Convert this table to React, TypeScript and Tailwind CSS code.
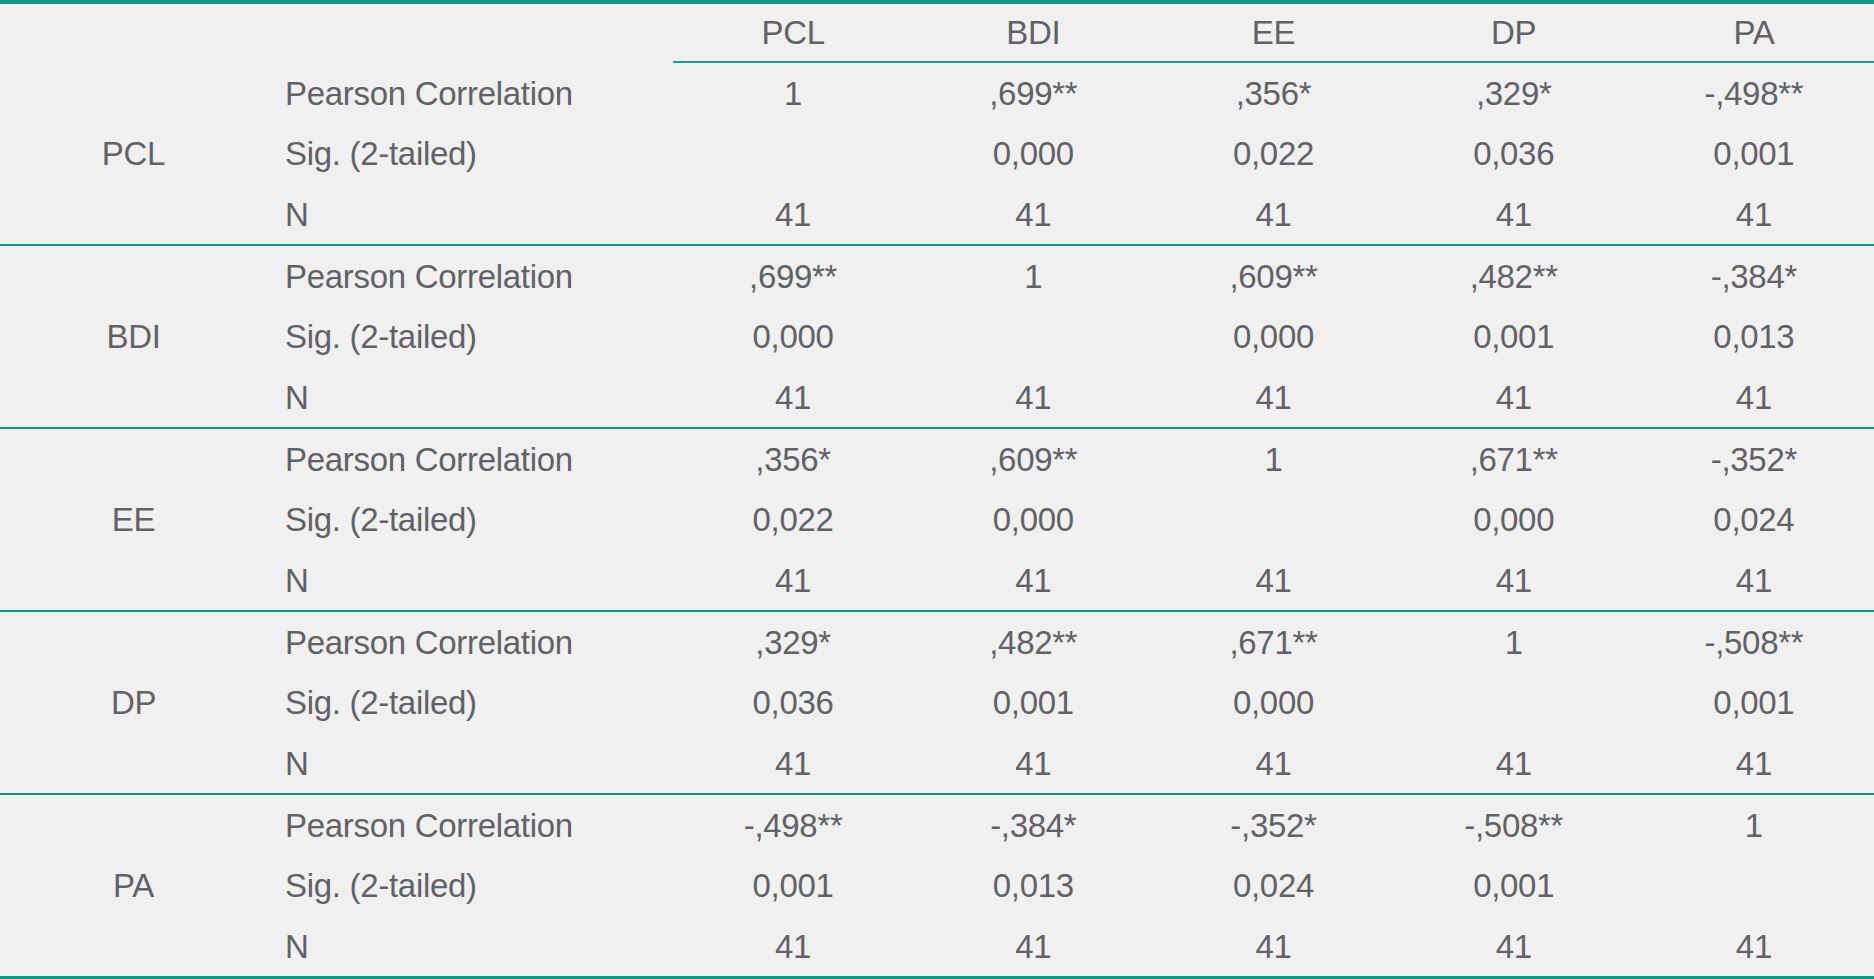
import React from "react";

const vars = ["PCL", "BDI", "EE", "DP", "PA"];

// correlation matrix rows: [pearson, sig] per variable
const data: Record<string, { r: string[]; sig: string[] }> = {
  PCL: { r: ["1", ",699**", ",356*", ",329*", "-,498**"], sig: ["", "0,000", "0,022", "0,036", "0,001"] },
  BDI: { r: [",699**", "1", ",609**", ",482**", "-,384*"], sig: ["0,000", "", "0,000", "0,001", "0,013"] },
  EE: { r: [",356*", ",609**", "1", ",671**", "-,352*"], sig: ["0,022", "0,000", "", "0,000", "0,024"] },
  DP: { r: [",329*", ",482**", ",671**", "1", "-,508**"], sig: ["0,036", "0,001", "0,000", "", "0,001"] },
  PA: { r: ["-,498**", "-,384*", "-,352*", "-,508**", "1"], sig: ["0,001", "0,013", "0,024", "0,001", ""] },
};

const cols = "grid grid-cols-[267px_406px_repeat(5,1fr)]";

function Cell({ children }: { children?: React.ReactNode }) {
  return <div className="flex items-center justify-center">{children}</div>;
}

export default function App() {
  return (
    <div
      className="min-h-screen w-full bg-[#f0f0f0] text-[#616266] text-[33px] tracking-[-0.3px] leading-none"
      style={{ fontFamily: '"Liberation Sans", Arial, sans-serif' }}
    >
      <div className="border-t-4 border-b-[3px] border-[#0a9a82]">
        {/* header */}
        <div className={`${cols} h-[59px]`}>
          <div />
          <div />
          {vars.map((v) => (
            <div key={v} className="flex items-center justify-center border-b-2 border-[#14a38b]">
              {v}
            </div>
          ))}
        </div>

        {vars.map((v, gi) => (
          <div
            key={v}
            className={`${cols} grid-rows-[60px_61px_60px] ${gi < vars.length - 1 ? "border-b-2 border-[#0a9a82]" : ""}`}
          >
            <div className="row-span-3 flex items-center justify-center">{v}</div>

            <div className="flex items-center pl-[18px]">Pearson Correlation</div>
            {data[v].r.map((x, i) => (
              <Cell key={i}>{x}</Cell>
            ))}

            <div className="flex items-center pl-[18px]">Sig. (2-tailed)</div>
            {data[v].sig.map((x, i) => (
              <Cell key={i}>{x}</Cell>
            ))}

            <div className="flex items-center pl-[18px]">N</div>
            {vars.map((_, i) => (
              <Cell key={i}>41</Cell>
            ))}
          </div>
        ))}
      </div>
    </div>
  );
}
